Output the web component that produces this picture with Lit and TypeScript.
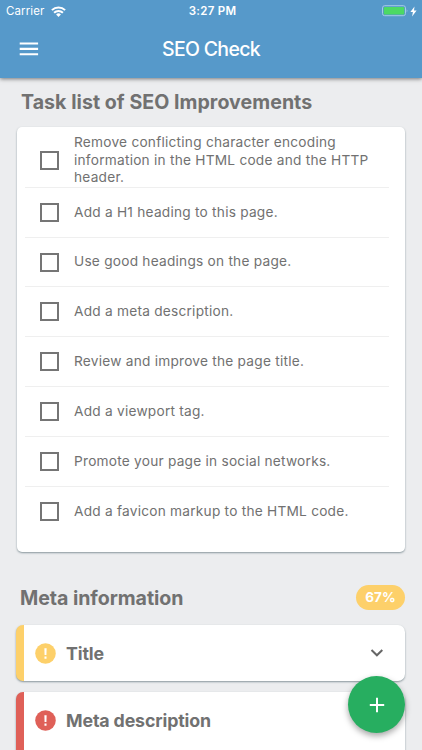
import { LitElement, html, css, svg } from "lit";
import { customElement } from "lit/decorators.js";

const TASKS = [
  "Remove conflicting character encoding information in the HTML code and the HTTP header.",
  "Add a H1 heading to this page.",
  "Use good headings on the page.",
  "Add a meta description.",
  "Review and improve the page title.",
  "Add a viewport tag.",
  "Promote your page in social networks.",
  "Add a favicon markup to the HTML code.",
];

const alertMark = svg`<path d="M9.1 5h2.2l-.2 6.6H9.3zM9.2 13.1h2v2.1h-2z" fill="#fff"/>`;

@customElement("app-root")
export class AppRoot extends LitElement {
  static styles = css`
    :host {
      display: block;
      position: relative;
      height: 750px;
      overflow: hidden;
      background: #ecedef;
      color: #717171;
      font-family: Inter, "Liberation Sans", sans-serif;
    }
    * { box-sizing: border-box; }
    svg { display: block; flex: none; }
    .top {
      position: relative;
      height: 78px;
      background: #5699ca;
      color: #fff;
      box-shadow: 0 1px 4px rgba(0, 0, 0, 0.5);
    }
    .status {
      display: grid;
      grid-template-columns: 1fr auto 1fr;
      align-items: center;
      height: 22px;
      padding: 0 5px 0 6px;
      font-size: 11.5px;
      line-height: 22px;
    }
    .carrier { display: flex; align-items: center; gap: 6px; letter-spacing: 0.12px; }
    .time { font-weight: 600; letter-spacing: 0.27px; padding-left: 2px; }
    .power { display: flex; justify-content: flex-end; align-items: center; gap: 2px; }
    .bar {
      display: grid;
      grid-template-columns: 60px 1fr 60px;
      align-items: center;
      height: 54px;
    }
    .menu { margin-left: 19px; }
    .bar h1 {
      margin: 0;
      text-align: center;
      font-size: 19.5px;
      line-height: 24px;
      font-weight: 500;
      letter-spacing: -0.7px;
    }
    h2 {
      margin: 0;
      font-size: 19.6px;
      line-height: 26px;
      font-weight: 700;
      letter-spacing: -0.05px;
    }
    .tasks-title { padding: 11px 21px 12px; height: 49px; letter-spacing: 0.04px; }
    .card {
      margin: 0 17px;
      background: #fff;
      border-radius: 5px;
      box-shadow: 0 1px 2px rgba(55, 80, 90, 0.55);
    }
    .tasks { height: 425px; padding: 7px 16px 0 8px; }
    .task {
      display: flex;
      align-items: center;
      height: 49.85px;
      padding-left: 15px;
      border-bottom: 1px solid #efefef;
      font-size: 13.7px;
      line-height: 17.3px;
      letter-spacing: 0.23px;
    }
    .task:first-child { height: 53.8px; }
    .task:last-child { border-bottom-color: transparent; }
    .box { flex: none; width: 19px; height: 19px; border: 2px solid #757575; margin-right: 15px; }
    .meta {
      display: flex;
      align-items: center;
      justify-content: space-between;
      height: 73px;
      padding: 18px 17px 0 20px;
    }
    .score {
      width: 49px;
      height: 25px;
      border-radius: 13px;
      background: #fdd06a;
      color: #fff;
      font-size: 13.5px;
      line-height: 25px;
      font-weight: 700;
      text-align: center;
    }
    .result {
      display: flex;
      align-items: center;
      height: 56px;
      margin-bottom: 11px;
      padding: 0 20px 0 11px;
      border-left: 8px solid #fdd06a;
      border-radius: 7px;
      font-size: 17.8px;
      font-weight: 700;
      letter-spacing: -0.14px;
      margin-left: 16px;
    }
    .bad { border-left-color: #df6058; height: 80px; padding-bottom: 24px; }
    .result .label { flex: 1; margin-left: 10px; }
    .add {
      position: absolute;
      left: 348px;
      top: 676px;
      width: 57px;
      height: 57px;
      border: 0;
      border-radius: 50%;
      padding: 0;
      background: #27ae60;
      box-shadow: 0 3px 6px rgba(0, 0, 0, 0.35);
      display: grid;
      place-items: center;
    }
  `;

  render() {
    return html`
      <header class="top">
        <div class="status">
          <div class="carrier">
            <span>Carrier</span>
            <svg width="15" height="11" viewBox="0 0 15 11" fill="none" stroke="#fff" stroke-width="2">
              <path d="M.9 4.1a9.4 9.4 0 0 1 13.2 0M3.1 6.8a6.2 6.2 0 0 1 8.8 0" />
              <path d="M7.5 10.9 5.1 8.5a3.4 3.4 0 0 1 4.8 0z" fill="#fff" stroke="none" />
            </svg>
          </div>
          <div class="time">3:27 PM</div>
          <div class="power">
            <svg width="26" height="12" viewBox="0 0 26 12">
              <rect x=".5" y=".7" width="23" height="10" rx="2.2" fill="none" stroke="#a5cbe5" />
              <rect x="1.8" y="2" width="20.5" height="7.5" rx="1" fill="#4cd964" />
              <path d="M24.7 4.2q1.4 1.5 0 3z" fill="#a5cbe5" />
            </svg>
            <svg width="7" height="11" viewBox="0 0 7 11"><path d="M4.5.4.4 6h2.5l-.8 4.4L6.6 4.6H4z" fill="#fff" /></svg>
          </div>
        </div>
        <div class="bar">
          <svg class="menu" width="20" height="14" viewBox="0 0 20 14"><path d="M.7 1.5h18.4M.7 6.9h18.4M.7 12.3h18.4" stroke="#fff" stroke-width="2.1" /></svg>
          <h1>SEO Check</h1>
        </div>
      </header>
      <h2 class="tasks-title">Task list of SEO Improvements</h2>
      <section class="card tasks">
        ${TASKS.map((t) => html`<div class="task"><span class="box"></span><span>${t}</span></div>`)}
      </section>
      <div class="meta"><h2>Meta information</h2><span class="score">67%</span></div>
      <section class="card result">
        <svg width="21" height="21" viewBox="0 0 20.4 20.4"><circle cx="10.2" cy="10.2" r="10" fill="#fdd06a" />${alertMark}</svg>
        <span class="label">Title</span>
        <svg width="16" height="10" viewBox="0 0 16 10"><path d="m2.5 2 5.4 5.3L13.3 2" fill="none" stroke="#666" stroke-width="2" /></svg>
      </section>
      <section class="card result bad">
        <svg width="21" height="21" viewBox="0 0 20.4 20.4"><circle cx="10.2" cy="10.2" r="10" fill="#df6058" />${alertMark}</svg>
        <span class="label">Meta description</span>
      </section>
      <button class="add" aria-label="Add">
        <svg width="16" height="16" viewBox="0 0 16 16"><path d="M.8 8h14.4M8 .8v14.4" stroke="#fff" stroke-width="2" /></svg>
      </button>
    `;
  }
}
